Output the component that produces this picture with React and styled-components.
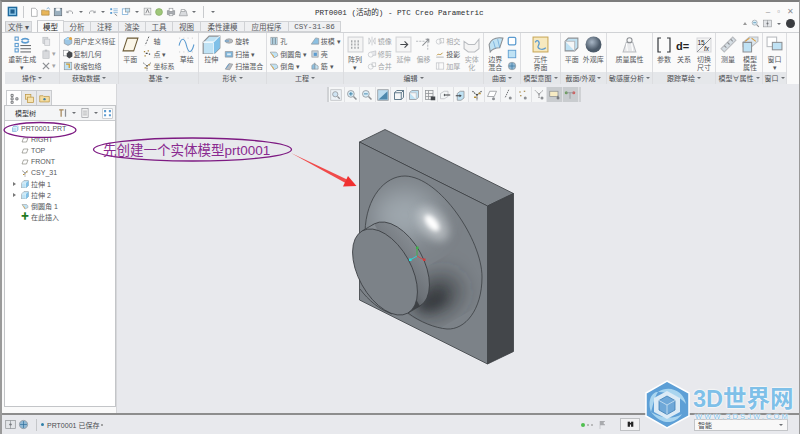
import React from "react";
import styled, { createGlobalStyle } from "styled-components";

const Global = createGlobalStyle`
html,body{margin:0;padding:0;background:#e8e9ed;}
body{font-family:"Liberation Sans","Noto Sans CJK SC",sans-serif;}
`;

const B = "#5b9bd0";
const L = "#bfe2f4";
const G = "#8d9094";
const D = "#45484c";
const P = "#b9bcc0";

const icons = {
  regen: <><rect x="1" y="1" width="3" height="3" fill="none" stroke={B}/><rect x="1" y="7" width="3" height="3" fill="none" stroke={B}/><rect x="1" y="12" width="3" height="3" fill="none" stroke={B}/><path d="M7 4a4 3 0 0 1 7 0M14 5a4 3 0 0 1-7 0" fill="none" stroke={B} strokeWidth="1.6"/><path d="M6 9h10M6 12h10M6 15h10" stroke={D} strokeWidth=".8"/></>,
  copy: <><rect x="3" y="2" width="8" height="10" fill="#d8dadd" stroke={P}/><rect x="6" y="5" width="8" height="10" fill="#e6e7ea" stroke={P}/></>,
  paste: <><rect x="3" y="3" width="10" height="12" fill="#d8dadd" stroke={P}/><rect x="6" y="1" width="4" height="3" fill={P}/></>,
  del: <path d="M3 3l10 10M13 3L3 13" stroke={G} strokeWidth="2"/>,
  udf: <><path d="M2 6l6-4 6 4-6 4z" fill={L} stroke={B}/><path d="M2 6v6l6 3 6-3V6" fill="#9cc6e4" stroke={G}/><circle cx="12" cy="4" r="2.5" fill="#e2a33c"/></>,
  geom: <><rect x="1" y="2" width="8" height="9" fill="#fff" stroke={G}/><path d="M6 7l4-4 5 3v6l-5 3-4-3z" fill={D}/></>,
  wrap: <><rect x="2" y="2" width="12" height="12" fill={L} stroke={G}/><path d="M5 5h5v6" fill="none" stroke="#d29a2c" strokeWidth="2"/></>,
  plane: <path d="M5 2h10l-4 12H1z" fill="#fbf6e8" stroke="#6b5a35" strokeWidth="1"/>,
  planeSm: <path d="M5 4h9l-3 8H2z" fill="#fff" stroke="#5f5f52" strokeWidth="1"/>,
  axis: <path d="M11 1L5 15" stroke={D} strokeWidth="1.4" strokeDasharray="3 2"/>,
  point: <><path d="M3 4h2M9 3h2M4 11h2" stroke="#a9822f" strokeWidth="2"/><path d="M6 7h3M11 8h2" stroke={D} strokeWidth="2"/></>,
  csys: <><path d="M8 8L2 3M8 8l6-5M8 8v7" stroke={D} strokeWidth="1.4" strokeDasharray="2 1"/><path d="M4 11h3M10 6h3" stroke="#b88f34" strokeWidth="2"/></>,
  sketch: <><path d="M1 9c2-8 5-8 7 0s5 7 7-1" fill="none" stroke={B} strokeWidth="1"/><path d="M1 2h14M1 15h14" stroke={P} strokeWidth=".7" strokeDasharray="1 3"/></>,
  extrude: <><path d="M1 6l5-5h9v10l-5 5H1z" fill={L} stroke={G}/><path d="M1 6h9v10M10 6l5-5" fill="none" stroke="#fff"/><path d="M10 6l5-5v10l-5 5z" fill="#7fc0e8"/></>,
  rev: <><ellipse cx="8" cy="8" rx="6" ry="3.5" fill={P} stroke={G}/><path d="M1 8h7" stroke={B} strokeWidth="1.6"/></>,
  sweep: <><path d="M2 4h12v9H2z" fill="#7fb4d8" stroke={G}/><path d="M5 7h6v3H5z" fill="#ddeef8"/></>,
  blend: <><path d="M2 13l6-9 6 1-5 9z" fill={P} stroke={G}/><path d="M3 12l5-7" stroke={B} strokeWidth="1.4"/></>,
  hole: <><rect x="3" y="2" width="10" height="12" fill={L} stroke={G}/><path d="M6 3v10M10 3v10" stroke={D}/></>,
  round: <><path d="M2 5h8c3 0 4 3 4 6l-6 3z" fill={L} stroke={G}/><path d="M2 5l6 6v3" fill="#e8a53a"/></>,
  shell: <><rect x="3" y="3" width="10" height="10" fill="#c9d4dc" stroke={G}/><rect x="6" y="6" width="5" height="5" fill={B}/></>,
  draft: <path d="M2 13L9 3l5 1v9z" fill="#8cc0e2" stroke={G}/>,
  rib: <><path d="M3 13V7l5-4v10z" fill="#8cc0e2" stroke={G}/><path d="M8 13V5l5 3v5z" fill={L} stroke={G}/></>,
  pattern: <><rect x="1" y="1" width="14" height="14" fill="#f4f4f4" stroke="#cfd0d3"/><path d="M4 5h1M7 5h1M10 5h1M4 8h1M7 8h1M10 8h1M4 11h1M7 11h1M10 11h1" stroke={G} strokeWidth="2"/></>,
  mirror: <path d="M3 3l3 5-3 5zM13 3l-3 5 3 5zM8 1v14" fill="none" stroke={P}/>,
  trim: <><circle cx="6" cy="9" r="4" fill="none" stroke={P}/><path d="M6 5l8-2v7H9" fill="#e6e7ea" stroke={P}/></>,
  merge: <><circle cx="6" cy="9" r="4" fill="none" stroke={P}/><rect x="8" y="3" width="6" height="6" fill="none" stroke={P}/></>,
  extend: <><rect x="1" y="1" width="14" height="14" fill="#f6f6f6" stroke="#d3d4d7"/><path d="M5 8h6M9 5l3 3-3 3" fill="none" stroke={D}/></>,
  offset: <><path d="M1 5h8M12 2v12" stroke={P} strokeDasharray="2 1"/><path d="M7 9l6-6M10 3h3v3" fill="none" stroke={G}/></>,
  inter: <><circle cx="6" cy="9" r="4" fill="none" stroke={P}/><rect x="8" y="4" width="6" height="7" fill="none" stroke={P}/></>,
  project: <><path d="M2 13h12" stroke={G}/><path d="M3 10c3-4 5 2 9-4" fill="none" stroke="#b88f34" strokeWidth="1.5"/></>,
  thick: <><rect x="2" y="3" width="12" height="10" fill="none" stroke={P}/><path d="M6 3v10" stroke={P}/></>,
  solidify: <path d="M1 5l4 3h6l4-5v9l-4 3H5l-4-3z" fill="#f4f4f4" stroke={P}/>,
  boundary: <><path d="M2 8C4 3 9 1 15 2l-3 9c-4 0-8 2-9 4z" fill={L} stroke={G}/><path d="M6 5l2 7M10 3l2 8" stroke={B} strokeWidth=".6"/></>,
  fill: <rect x="2" y="2" width="12" height="12" rx="2" fill="#fff" stroke={B} strokeWidth="2"/>,
  fillB: <rect x="2" y="2" width="12" height="12" fill={L} stroke={B} strokeWidth="1.4"/>,
  mesh: <><circle cx="8" cy="8" r="6" fill="#90b8d4" stroke={G}/><path d="M3 8h10M8 3v10" stroke="#2f6d9a"/></>,
  comp: <><rect x="1" y="1" width="14" height="14" fill="#f7e9bf" stroke="#c9a95a"/><path d="M3 6c2-4 5 0 3 3s4 5 7 2" fill="none" stroke={B} strokeWidth="1.2"/></>,
  ball: <><defs><radialGradient id="bl" cx=".4" cy=".35"><stop offset="0" stopColor="#a9b7c6"/><stop offset="1" stopColor="#4c5a69"/></radialGradient></defs><circle cx="8" cy="8" r="7.5" fill="url(#bl)"/></>,
  mass: <><path d="M2 15l3-9h6l3 9z" fill="#e8e9eb" stroke={P}/><circle cx="8" cy="4" r="2.4" fill="none" stroke={G}/><path d="M5 7l1 7M10 7l1 7" stroke="#fff"/></>,
  brack: <path d="M5 1H2v14h3M11 1h3v14h-3" fill="none" stroke="#33363a" strokeWidth="1.2"/>,
  rel: <text x="0" y="13" fontSize="11" fontWeight="700" fontFamily="Liberation Sans" fill="#222">d=</text>,
  toggle: <><rect x="1" y="1" width="14" height="14" fill="#f2f2f2" stroke="#d5d6d9"/><path d="M1 15L15 1" stroke={G}/><text x="1.5" y="7.5" fontSize="6.5" fontFamily="Liberation Sans" fill="#222">15</text><text x="8" y="14" fontSize="6.5" fontStyle="italic" fontFamily="Liberation Sans" fill="#222">fx</text></>,
  measure: <><path d="M1 12L12 1l3 3L4 15z" fill="#d5dde3" stroke={P}/><path d="M4 9l2 2M7 6l2 2M10 3l2 2" stroke={G}/></>,
  props: <><path d="M1 6l6-5h8v4l-6 5H1z" fill="#dbe6ee" stroke={P}/><path d="M1 6h8v9H1z" fill={L} stroke={G}/><path d="M3 5l4-3M9 2l4 3" stroke="#d89a3a"/></>,
  win: <><rect x="1" y="1" width="9" height="9" fill="#fff" stroke={P}/><rect x="6" y="6" width="9" height="7" fill={L} stroke={G}/></>,
  cube: <><path d="M3 5l3-3h8v8l-3 3H3z" fill={L} stroke={B}/><path d="M3 5h8v8M11 5l3-3" fill="none" stroke="#fff"/></>,
  zoomFit: <><rect x="1" y="1" width="14" height="14" fill="#eef3f7" stroke={P}/><circle cx="7" cy="7" r="3.5" fill="#cfe4f3" stroke={G}/><path d="M10 10l3 3" stroke={G} strokeWidth="1.6"/></>,
  zoomIn: <><circle cx="6.5" cy="6.5" r="4.5" fill="#d9ecf7" stroke={G}/><path d="M4 6.5h5M6.5 4v5" stroke="#1f6f99"/><path d="M10 10l4 4" stroke={G} strokeWidth="2"/></>,
  zoomOut: <><circle cx="6.5" cy="6.5" r="4.5" fill="#d9ecf7" stroke={G}/><path d="M4 6.5h5" stroke="#1f6f99"/><path d="M10 10l4 4" stroke={G} strokeWidth="2"/></>,
  repaint: <><rect x="1" y="1" width="14" height="14" fill="#bcdcef" stroke={G}/><path d="M2 14L14 3v11z" fill="#4d88ad"/></>,
  box3: <><path d="M2 5l3-3h9v9l-3 3H2z" fill="#f4f6f7" stroke="#35566b"/><path d="M2 5h9v9M11 5l3-3" fill="none" stroke="#35566b"/></>,
  box3L: <><path d="M2 5l3-3h9v9l-3 3H2z" fill={L} stroke={G}/><path d="M2 5h9v9" fill="#f4f6f7" stroke={P}/></>,
  table: <><rect x="2" y="2" width="10" height="12" fill="#f2f2f2" stroke={G}/><path d="M2 6h10M2 10h10M6 2v12" stroke={G}/><rect x="9" y="10" width="6" height="5" fill={D}/></>,
  arrowL: <><path d="M2 6l5-3h5v7l-5 3H2z" fill="#f4f6f7" stroke={P}/><path d="M8 8h7" stroke={D} strokeWidth="1.4"/><path d="M8 6v4L6 8z" fill={D}/></>,
  arrowR: <><path d="M3 6l4-3h5v9l-4 3H3z" fill={L} stroke={G}/><path d="M1 9h6" stroke={D} strokeWidth="1.4"/><path d="M6 7v4l3-2z" fill={D}/></>,
  datumP: <><path d="M5 3h9l-3 7H2z" fill="#fff" stroke={G}/><circle cx="10" cy="13" r="2" fill={G}/></>,
  datumA: <><path d="M9 1L4 12" stroke={D} strokeDasharray="2 1"/><circle cx="11" cy="12" r="2" fill={G}/></>,
  datumD: <><path d="M3 4h2M9 3h2M4 9h2" stroke="#9a7a30" strokeWidth="1.6"/><circle cx="11" cy="12" r="2" fill={G}/></>,
  datumS: <><path d="M8 7L3 2M8 7l5-5M8 7v6" stroke={D} strokeDasharray="2 1"/><circle cx="12" cy="12" r="2" fill={G}/></>,
  note: <><rect x="1" y="3" width="11" height="7" fill="#f7ebc4" stroke={G}/><path d="M12 9v5M10 12h4" stroke={D}/></>,
  persp: <><circle cx="3" cy="5" r="2" fill="#6d9f5f"/><circle cx="13" cy="5" r="2" fill="#d26060"/><path d="M3 5h10M8 5v8" stroke={G}/></>,
  newf: <path d="M4 2h6l3 3v10H4z" fill="#fff" stroke={G}/>,
  open: <><path d="M1 13V5h5l1 1h6v7z" fill="#e9b659" stroke="#a4803e"/><path d="M9 3l3-2 2 3" fill="none" stroke="#4f8fc4"/></>,
  save: <><rect x="2" y="2" width="12" height="12" fill="#9bb0bf" stroke="#5b6770"/><rect x="5" y="2" width="6" height="4" fill="#fff"/></>,
  undo: <path d="M3 9a5 4 0 0 1 9-1v3M3 6v3h3" fill="none" stroke={G} strokeWidth="1.2"/>,
  redo: <path d="M13 9a5 4 0 0 0-9-1v3M13 6v3h-3" fill="none" stroke={G} strokeWidth="1.2"/>,
  regenQ: <><rect x="2" y="2" width="3" height="3" fill={B}/><rect x="2" y="8" width="3" height="3" fill={B}/><path d="M7 3h7M7 6h7M7 9h7" stroke={B}/><path d="M9 11l4 3" stroke={D}/></>,
  wins: <><rect x="2" y="3" width="9" height="9" fill="#fff" stroke={B}/><rect x="7" y="2" width="7" height="6" fill={L} stroke={G}/></>,
  textA: <><rect x="2" y="2" width="12" height="12" fill="#f1f1f1" stroke={G}/><path d="M5 11l3-7 3 7" fill="none" stroke={D}/></>,
  globe: <circle cx="8" cy="8" r="5.5" fill="#9fc77a" stroke="#7fa65c"/>,
  print: <><rect x="2" y="6" width="12" height="6" fill="#a9adb2" stroke={G}/><rect x="5" y="2" width="6" height="5" fill="#fff" stroke={G}/><rect x="5" y="11" width="6" height="3" fill="#fff" stroke={G}/></>,
  tool2: <><path d="M2 14l3-8h8l2 8z" fill="#d9dbde" stroke={G}/><path d="M5 4h6v3H5z" fill="#fff" stroke={G}/></>,
  blueQ: <><rect x="1" y="1" width="14" height="14" fill="#1f6a9e"/><rect x="3" y="3" width="10" height="10" fill="#8cc6e8"/><rect x="5" y="5" width="6" height="6" fill="#1f5f8e"/></>,
  treeTab: <path d="M3 2h3v3H3zM3 7h3v3H3zM3 12h3v3H3zM10 7h3v3h-3z" fill="none" stroke={D}/>,
  layers: <><rect x="2" y="2" width="8" height="7" fill="#f6e3b0" stroke="#b8923f"/><rect x="5" y="6" width="9" height="8" fill="#f6e3b0" stroke="#b8923f"/></>,
  folderTab: <><path d="M1 13V4h5l1 1h8v8z" fill="#f4dc9f" stroke="#b8923f"/><circle cx="8" cy="9" r="1.7" fill="#3b7ea8"/></>,
  tools: <><path d="M2 2h7v2H6v10H4V4H2z" fill="#a5875a"/><rect x="11" y="2" width="2" height="12" fill={G}/></>,
  list: <><rect x="3" y="1" width="10" height="14" fill="#f3f3f3" stroke={G}/><path d="M5 5h6M5 8h6M5 11h6" stroke={G}/></>,
  treeCfg: <><rect x="1" y="1" width="14" height="14" fill="#fff" stroke={P}/><path d="M3 3h3v3H3zM3 9h3v3H3zM10 3h3v3h-3zM10 9h3v3h-3z" fill="#5b9bd0"/></>,
  runA: <><rect x="1" y="2" width="14" height="12" fill="#e3e5e8" stroke={G}/><circle cx="8" cy="8" r="1.6" fill={D}/><path d="M8 2v12" stroke={G}/></>,
  bino: <><rect x="3" y="3" width="4" height="9" fill="#222"/><rect x="9" y="3" width="4" height="9" fill="#222"/><rect x="6" y="5" width="4" height="3" fill="#222"/></>
};

const Ico = ({ k, s = 10 }) => (
  <svg width={s} height={s} viewBox="0 0 16 16" style={{ flex: "none", display: "block" }}>
    {icons[k]}
  </svg>
);

const Page = styled.div`
  position: relative;
  width: 800px;
  height: 434px;
  overflow: hidden;
  background: #e8e9ed;
`;
const Shell = styled.div`
  width: 100%;
  height: 100%;
  box-sizing: border-box;
  border-top: 2px solid #7c7c7c;
  border-left: 2px solid #9a9a9a;
  border-right: 1px solid #9a9a9a;
  display: flex;
  flex-direction: column;
  color: #55575b;
  font-size: 7px;
`;
const TitleBar = styled.div`
  height: 19px;
  padding: 0 3px 0 5px;
  display: flex;
  align-items: center;
  background: #fafafa;
`;
const Quick = styled.div`
  width: 308px;
  display: flex;
  align-items: center;
  gap: 2px;
`;
const Caret = styled.span`
  width: 0;
  height: 0;
  margin: ${(p) => p.$m || "0 2px"};
  flex: none;
  border-left: 2px solid transparent;
  border-right: 2px solid transparent;
  border-top: 2px solid #6d7074;
`;
const VBar = styled.span`
  width: 1px;
  height: 12px;
  margin: 0 3px;
  background: #c8cacd;
`;
const Title = styled.div`
  width: 168px;
  font-family: "Liberation Mono", "Noto Sans CJK SC", monospace;
  font-size: 7.6px;
  white-space: nowrap;
  color: #2c2d30;
`;
const WinBtns = styled.div`
  margin-left: auto;
  display: flex;
  gap: 7px;
  color: #8b8d91;
  font-size: 8px;
  padding-right: 2px;
`;
const TabRow = styled.div`
  height: 11px;
  padding-left: 3px;
  display: flex;
  align-items: flex-end;
  background: #fafafa;
  position: relative;
`;
const Tab = styled.div`
  width: ${(p) => p.$w}px;
  height: ${(p) => (p.$on ? 12 : 11)}px;
  margin-right: ${(p) => p.$mr || 0}px;
  box-sizing: border-box;
  display: flex;
  align-items: center;
  justify-content: center;
  background: ${(p) => (p.$on ? "#fafafa" : p.$file ? "#e3e5e8" : "#eff0f2")};
  border: 1px solid #d0d2d5;
  border-bottom: ${(p) => (p.$on ? "none" : "1px solid #d0d2d5")};
  border-left: ${(p) => (p.$on || p.$file ? "1px solid #c4c6c9" : "none")};
  color: ${(p) => (p.$on ? "#222" : "#55575b")};
  font-family: ${(p) => (p.$mono ? '"Liberation Mono",monospace' : "inherit")};
  font-size: 7.5px;
  white-space: nowrap;
`;
const HelpBar = styled.div`
  position: absolute;
  right: 4px;
  top: -2px;
  display: flex;
  align-items: center;
  gap: 3px;
`;
const Ribbon = styled.div`
  height: 52px;
  padding-left: 3px;
  display: flex;
  background: #fafafa;
  border-top: 1px solid #d0d2d5;
  box-sizing: border-box;
`;
const Group = styled.div`
  width: ${(p) => p.$w}px;
  flex: none;
  display: flex;
  flex-direction: column;
  border-right: 1px solid #dcdde0;
  box-sizing: border-box;
`;
const GroupBody = styled.div`
  flex: 1;
  display: flex;
  justify-content: space-around;
  padding: 2px 1px 0;
  min-height: 0;
`;
const GroupLabel = styled.div`
  height: 12px;
  display: flex;
  align-items: center;
  justify-content: center;
  gap: 2px;
  background: #e5e7ea;
  color: #4b4d51;
  white-space: nowrap;
`;
const BigTool = styled.div`
  display: flex;
  flex-direction: column;
  align-items: center;
  gap: 1px;
  line-height: 8px;
  text-align: center;
  white-space: pre-line;
  flex: none;
  color: ${(p) => (p.$off ? "#a3a5a8" : "inherit")};
`;
const BigIcon = styled.div`
  height: 19px;
  margin-bottom: 1px;
  display: flex;
  align-items: center;
  justify-content: center;
`;
const SmallCol = styled.div`
  display: flex;
  flex-direction: column;
  gap: 2.5px;
  padding-top: 1px;
  flex: none;
`;
const SmallTool = styled.div`
  height: 10px;
  display: flex;
  align-items: center;
  gap: 1px;
  white-space: nowrap;
  color: ${(p) => (p.$off ? "#a3a5a8" : "inherit")};
`;
const Main = styled.div`
  flex: 1;
  display: flex;
  min-height: 0;
`;
const LeftPanel = styled.div`
  width: 114px;
  padding: 6px 0 6px 2px;
  box-sizing: border-box;
  display: flex;
  flex-direction: column;
  background: #fafafa;
  flex: none;
`;
const PanelTabs = styled.div`
  height: 15px;
  padding-left: 2px;
  display: flex;
`;
const PanelTab = styled.div`
  width: 14px;
  display: flex;
  align-items: center;
  justify-content: center;
  background: ${(p) => (p.$on ? "#fff" : "#e8e9eb")};
  border: 1px solid #c9cbce;
  border-bottom: none;
  margin-right: -1px;
`;
const TreeBox = styled.div`
  flex: 1;
  background: #fff;
  border: 1px solid #c3c5c8;
`;
const TreeHead = styled.div`
  height: 14px;
  padding: 0 2px 0 10px;
  display: flex;
  align-items: center;
  background: #f4f5f6;
  border-bottom: 1px solid #c9cbce;
  color: #2e2f32;
`;
const TreeList = styled.div`
  padding-top: 2px;
`;
const TreeRow = styled.div`
  height: 11px;
  padding-left: ${(p) => p.$i}px;
  display: flex;
  align-items: center;
  gap: 2px;
  color: #55575b;
  white-space: nowrap;
`;
const Expander = styled.span`
  width: 0;
  height: 0;
  margin-right: 3px;
  border-top: 2.5px solid transparent;
  border-bottom: 2.5px solid transparent;
  border-left: 3px solid #777;
`;
const InsertMark = styled.span`
  width: 8px;
  color: #1f7a1f;
  font-size: 8px;
  font-weight: 700;
  line-height: 8px;
  text-align: center;
`;
const Viewport = styled.div`
  flex: 1;
  display: flex;
  align-items: flex-start;
  padding: 3px 0 0 210px;
  background: #e8e9ed;
  border-left: 1px solid #d6d7da;
`;
const ViewBar = styled.div`
  height: 15px;
  display: flex;
  align-items: center;
  background: #f5f6f7;
  border-left: 2px solid #d0d2d5;
  border-right: 2px solid #d0d2d5;
`;
const ViewBtn = styled.div`
  width: 15.6px;
  height: 15px;
  box-sizing: border-box;
  display: flex;
  align-items: center;
  justify-content: center;
  border-right: 1px solid #e0e1e4;
  background: ${(p) => (p.$on ? "#c9cccf" : "transparent")};
`;
const StatusBar = styled.div`
  height: 19px;
  flex: none;
  display: flex;
  align-items: center;
  padding: 0 0 0 3px;
  background: #e8e9ed;
  border-top: 2px solid #8d8d8d;
  color: #4b4d51;
`;
const StatusIcon = styled.div`
  width: 12px;
  height: 12px;
  margin-right: 1px;
`;
const StatusMsg = styled.div`
  display: flex;
  align-items: center;
  gap: 2px;
  margin-left: 5px;
  padding-left: 4px;
  border-left: 1px solid #c5c7ca;
  height: 12px;
  width: 540px;
  flex: none;
  white-space: nowrap;
`;
const Dot = styled.span`
  width: ${(p) => p.$s || 2}px;
  height: ${(p) => p.$s || 2}px;
  border-radius: 50%;
  background: ${(p) => p.$c};
  margin-right: ${(p) => p.$mr || 0}px;
  flex: none;
`;
const FindBtn = styled.div`
  width: 20px;
  height: 13px;
  margin-left: 15px;
  display: flex;
  align-items: center;
  justify-content: center;
  background: #f2f2f3;
  border: 1px solid #bfc1c4;
  box-sizing: border-box;
`;
const Select = styled.div`
  width: 94px;
  height: 12px;
  margin-left: 54px;
  box-sizing: border-box;
  display: flex;
  align-items: center;
  justify-content: space-between;
  padding: 0 2px 0 3px;
  background: #f8f8f8;
  border: 1px solid #c3c5c8;
`;

/* things lying over the window */
const Scene = styled.svg`
  position: absolute;
  left: 0;
  top: 0;
  pointer-events: none;
`;
const Callout = styled.div`
  position: absolute;
  left: 103px;
  top: 142px;
  font-size: 13.5px;
  line-height: 17px;
  color: #8a2a90;
  white-space: nowrap;
`;
const Mark = styled.div`
  position: absolute;
  left: 693px;
  top: 386px;
  color: #7fc0e8;
  text-shadow: 0 0 2px #fff, 0 0 2px #fff, 0 0 1px #fff;
`;
const MarkTitle = styled.div`
  font-size: 23.5px;
  line-height: 26px;
  font-weight: 700;
  white-space: nowrap;
`;
const MarkUrl = styled.div`
  font-size: 7.5px;
  line-height: 9px;
  letter-spacing: 2.1px;
  padding-left: 2px;
  white-space: nowrap;
`;

const tabs = [
  ["文件 ▾", 27, { $file: true, $mr: 5 }],
  ["模型", 27, { $on: true }],
  ["分析", 27],
  ["注释", 28],
  ["渲染", 27],
  ["工具", 27],
  ["视图", 28],
  ["柔性建模", 44],
  ["应用程序", 44],
  ["CSY-31-86", 52, { $mono: true }]
];

const big = (k, t, s = 16, off) => ({ type: "big", k, t, s, off });
const col = (...rows) => ({ type: "col", rows });

const groups = [
  { w: 55, label: "操作", items: [big("regen", "重新生成\n▾", 17), col(["copy", "", 1], ["paste", "▾", 1], ["del", "▾", 1])] },
  { w: 59, label: "获取数据", items: [col(["udf", "用户定义特征"], ["geom", "复制几何"], ["wrap", "收缩包络"])] },
  { w: 80, label: "基准", items: [big("plane", "平面", 17), col(["axis", "轴"], ["point", "点 ▾"], ["csys", "坐标系"]), big("sketch", "草绘", 17)] },
  { w: 68, label: "形状", items: [big("extrude", "拉伸", 19), col(["rev", "旋转"], ["sweep", "扫描 ▾"], ["blend", "扫描混合"])] },
  { w: 77, label: "工程", items: [col(["hole", "孔"], ["round", "倒圆角 ▾"], ["round", "倒角 ▾"]), col(["draft", "拔模 ▾"], ["shell", "壳"], ["rib", "筋 ▾"])] },
  { w: 140, label: "编辑", items: [big("pattern", "阵列\n▾", 17), col(["mirror", "镜像", 1], ["trim", "修剪", 1], ["merge", "合并", 1]), big("extend", "延伸", 17, 1), big("offset", "偏移", 17, 1), col(["inter", "相交", 1], ["project", "投影"], ["thick", "加厚", 1]), big("solidify", "实体\n化", 17, 1)] },
  { w: 37, label: "曲面", items: [big("boundary", "边界\n混合", 17), col(["fill", ""], ["fillB", ""], ["mesh", ""])] },
  { w: 40, label: "模型意图", items: [big("comp", "元件\n界面", 17)] },
  { w: 46, label: "截面/外观", items: [big("box3L", "平面", 17), big("ball", "外观库", 17)] },
  { w: 46, label: "敏感度分析", items: [big("mass", "质量属性", 17)] },
  { w: 63, label: "跟踪草绘", items: [big("brack", "参数", 16), big("rel", "关系", 16), big("toggle", "切换\n尺寸", 16)] },
  { w: 47, label: "模型∀属性", items: [big("measure", "测量", 17), big("props", "模型\n属性", 17)] },
  { w: 24, label: "窗口", items: [big("win", "窗口\n▾", 17)] }
];

const tree = [
  ["cube", "PRT0001.PRT", 6],
  ["planeSm", "RIGHT", 16],
  ["planeSm", "TOP", 16],
  ["planeSm", "FRONT", 16],
  ["csys", "CSY_31", 16],
  ["extrude", "拉伸 1", 8, true],
  ["extrude", "拉伸 2", 8, true],
  ["round", "倒圆角 1", 16],
  ["ins", "在此插入", 16]
];

const viewBtns = ["zoomFit", "zoomIn", "zoomOut", "repaint", "box3", "box3L", "table", "arrowL", "arrowR", "csys", "datumP", "datumA", "datumD", "datumS", "note", "persp"];

const EDGE = "#3b3f43";

const Model = () => (
  <>
    <defs>
      <clipPath id="dome">
        <path d="M365 232C366 197 385 176 405 176C440 177 482 240 482 277C482 310 465 330 447 329C425 328 400 310 380 296L360 260Z" />
      </clipPath>
      <linearGradient id="cyl" x1="0.3" y1="0" x2="0.7" y2="1">
        <stop offset="0" stopColor="#878d93" />
        <stop offset="0.55" stopColor="#6c7177" />
        <stop offset="1" stopColor="#3d4044" />
      </linearGradient>
      <filter id="b1" x="-50%" y="-50%" width="200%" height="200%"><feGaussianBlur stdDeviation="12" /></filter>
      <filter id="b2" x="-50%" y="-50%" width="200%" height="200%"><feGaussianBlur stdDeviation="4" /></filter>
      <filter id="b3" x="-50%" y="-50%" width="200%" height="200%"><feGaussianBlur stdDeviation="2" /></filter>
    </defs>
    <path d="M359.5 142L385 129.5L513.5 193.5L487.5 206Z" fill="#7d8389" stroke={EDGE} strokeWidth=".8" />
    <path d="M513.5 193.500V351.5L487.5 364V206Z" fill="#43464a" stroke={EDGE} strokeWidth=".8" />
    <path d="M359.5 142L487.5 206V364L359.5 300Z" fill="#7c8288" stroke={EDGE} strokeWidth=".8" />
    <g clipPath="url(#dome)">
      <rect x="355" y="170" width="135" height="165" fill="#7c8288" />
      <ellipse cx="405" cy="215" rx="32" ry="26" fill="#9fa7ae" filter="url(#b1)" />
      <ellipse cx="433" cy="224" rx="12" ry="20" transform="rotate(-40 433 224)" fill="#dfe3e6" opacity=".5" filter="url(#b2)" />
      <ellipse cx="432" cy="223" rx="5" ry="10" transform="rotate(-40 432 223)" fill="#fff" filter="url(#b3)" />
      <ellipse cx="436" cy="296" rx="24" ry="15" transform="rotate(-30 436 296)" fill="#2f3236" filter="url(#b1)" />
      <ellipse cx="432" cy="302" rx="14" ry="7" transform="rotate(-25 432 302)" fill="#36393d" opacity=".7" filter="url(#b2)" />
    </g>
    <path d="M365 232C366 197 385 176 405 176C440 177 482 240 482 277C482 310 465 330 447 329C435 328 420 322 408 313" fill="none" stroke={EDGE} strokeWidth=".8" />
    <path d="M360 289C368 300 380 310 392 314" fill="none" stroke={EDGE} strokeWidth=".8" />
    <ellipse cx="397" cy="265" rx="47" ry="26.4" transform="rotate(61 397 265)" fill="url(#cyl)" stroke={EDGE} strokeWidth=".8" />
    <path d="M362.2 230.9L374.2 223.9L419.8 306.1L407.8 313.1Z" fill="url(#cyl)" />
    <path d="M362.2 230.9L374.2 223.9M407.8 313.1L419.8 306.1" stroke={EDGE} strokeWidth=".8" />
    <ellipse cx="385" cy="272" rx="47" ry="26.4" transform="rotate(61 385 272)" fill="#7c8288" stroke={EDGE} strokeWidth=".8" />
    <path d="M417 256V248" stroke="#3fae4a" strokeWidth="1" />
    <rect x="416" y="246.5" width="2.5" height="2.5" fill="#3fae4a" />
    <path d="M417 256L410 260" stroke="#2fd0d0" strokeWidth="1" />
    <rect x="409" y="258.5" width="2.5" height="2.5" fill="#22e0e0" />
    <path d="M417 256L424 260" stroke="#d04a4a" strokeWidth="1" />
    <rect x="423" y="258.5" width="2.5" height="2.5" fill="#d43a3a" />
  </>
);

const Logo = () => (
  <>
    <path d="M667 381L689 393V416L667 428L646 416V393Z" fill="#5d9fd6" stroke="#fff" strokeWidth="1.5" />
    <path d="M658 392C670 384 684 392 686 404C680 396 668 392 658 392ZM651 412C647 400 652 392 658 392C654 398 653 406 651 412ZM682 414C674 426 660 424 651 412C660 418 672 420 682 414Z" fill="#a9d5ef" />
    <path d="M667 391L680 398V412L667 419L654 412V398Z" fill="#dcebf6" />
    <path d="M667 396L675 400.5V410L667 414.5L659 410V400.5Z" fill="#6fa8d8" stroke="#3f7fb5" strokeWidth=".8" />
    <path d="M659 400.5L667 405L675 400.5M667 405V414.5" fill="none" stroke="#cfe4f4" strokeWidth=".8" />
  </>
);

export default function App() {
  return (
    <Page>
      <Global />
      <Shell>
        <TitleBar>
          <Quick>
            <Ico k="blueQ" s={11} />
            <VBar />
            <Ico k="newf" s={10} />
            <Ico k="open" s={10} />
            <Ico k="save" s={10} />
            <Ico k="undo" s={10} /><Caret />
            <Ico k="redo" s={10} /><Caret />
            <Ico k="regenQ" s={10} />
            <Ico k="wins" s={10} /><Caret />
            <Ico k="textA" s={9} />
            <Ico k="globe" s={10} />
            <Ico k="print" s={10} />
            <Ico k="tool2" s={10} /><Caret />
            <VBar />
            <Caret />
          </Quick>
          <Title>PRT0001 (活动的) - PTC Creo Parametric</Title>
          <WinBtns><span>–</span><span>▫</span><span>✕</span></WinBtns>
        </TitleBar>
        <TabRow>
          {tabs.map(([t, w, o]) => (
            <Tab key={t} $w={w} {...o}>{t}</Tab>
          ))}
          <HelpBar>
            <Caret style={{ borderTop: "none", borderBottom: "3px solid #999" }} $m="0 1px 0 0" />
            <Ico k="zoomOut" s={9} />
            <Ico k="runA" s={9} /><Caret />
            <Dot $s={9} $c="#3a3c40" />
          </HelpBar>
        </TabRow>
        <Ribbon>
          {groups.map((g) => (
            <Group key={g.label} $w={g.w}>
              <GroupBody>
                {g.items.map((it, i) =>
                  it.type === "big" ? (
                    <BigTool key={i} $off={it.off}>
                      <BigIcon><Ico k={it.k} s={it.s} /></BigIcon>
                      {it.t}
                    </BigTool>
                  ) : (
                    <SmallCol key={i}>
                      {it.rows.map(([k, t, off], j) => (
                        <SmallTool key={j} $off={off}>
                          <Ico k={k} s={10} />
                          {t}
                        </SmallTool>
                      ))}
                    </SmallCol>
                  )
                )}
              </GroupBody>
              <GroupLabel>{g.label} <Caret $m="0" /></GroupLabel>
            </Group>
          ))}
        </Ribbon>
        <Main>
          <LeftPanel>
            <PanelTabs>
              <PanelTab $on><Ico k="treeTab" s={11} /></PanelTab>
              <PanelTab><Ico k="layers" s={11} /></PanelTab>
              <PanelTab><Ico k="folderTab" s={11} /></PanelTab>
            </PanelTabs>
            <TreeBox>
              <TreeHead>
                模型树
                <span style={{ flex: 1 }} />
                <Ico k="tools" s={10} /><Caret $m="0 4px" />
                <Ico k="list" s={10} /><Caret $m="0 4px" />
                <Ico k="treeCfg" s={11} />
              </TreeHead>
              <TreeList>
                {tree.map(([k, t, i, exp]) => (
                  <TreeRow key={t} $i={i}>
                    {exp && <Expander />}
                    {k === "ins" ? <InsertMark>✚</InsertMark> : <Ico k={k} s={8} />}
                    {t}
                  </TreeRow>
                ))}
              </TreeList>
            </TreeBox>
          </LeftPanel>
          <Viewport>
            <ViewBar>
              {viewBtns.map((k, i) => (
                <ViewBtn key={i} $on={i >= 14}><Ico k={k} s={12} /></ViewBtn>
              ))}
            </ViewBar>
          </Viewport>
        </Main>
        <StatusBar>
          <StatusIcon><Ico k="runA" s={11} /></StatusIcon>
          <StatusIcon><Ico k="mesh" s={11} /></StatusIcon>
          <StatusMsg>
            <Dot $s={3} $c="#2d7fa8" $mr={1} />
            PRT0001 已保存
            <Dot $s={2} $c="#888" />
          </StatusMsg>
          <Dot $s={4} $c="#4fbf4f" $mr={2} />
          <Dot $s={2} $c="#aaa" $mr={2} />
          <Dot $s={2} $c="#aaa" $mr={6} />
          <svg width="6" height="8" viewBox="0 0 6 8"><path d="M1 8V0h5L4 2l2 2H1" fill="#a9abae" stroke="#a9abae" strokeWidth=".5" /></svg>
          <FindBtn><Ico k="bino" s={9} /></FindBtn>
          <Select>智能<Caret /></Select>
        </StatusBar>
      </Shell>
      <Scene width="800" height="434" viewBox="0 0 800 434">
        <Model />
        <ellipse cx="40" cy="130" rx="36" ry="7.5" fill="none" stroke="#7d1a82" strokeWidth="1.3" />
        <ellipse cx="192.5" cy="149.5" rx="99" ry="11.5" fill="none" stroke="#7d1a82" strokeWidth="1.3" />
        <path d="M291 153L347 179.5L345.500 183Z" fill="#f04a4a" />
        <path d="M356.5 186L343 186.500L348 176Z" fill="#f03030" />
        <Logo />
      </Scene>
      <Callout>先创建一个实体模型prt0001</Callout>
      <Mark>
        <MarkTitle>3D世界网</MarkTitle>
        <MarkUrl>WWW.3DSJW.COM</MarkUrl>
      </Mark>
    </Page>
  );
}
